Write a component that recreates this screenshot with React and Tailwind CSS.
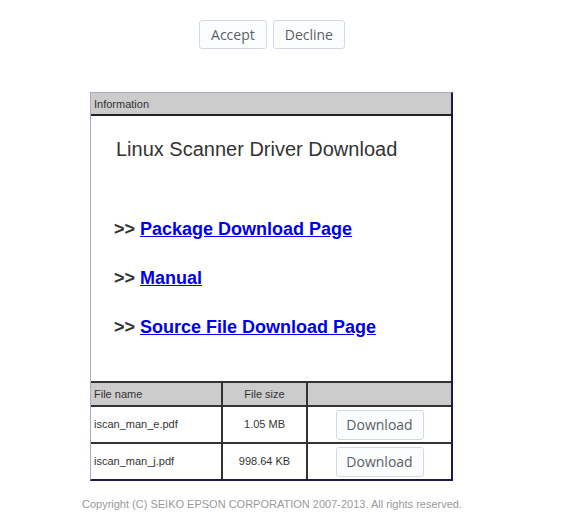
import React from 'react';

const files = [
  { name: 'iscan_man_e.pdf', size: '1.05 MB' },
  { name: 'iscan_man_j.pdf', size: '998.64 KB' },
];

const links = ['Package Download Page', 'Manual', 'Source File Download Page'];

const App = () => {
  return (
    <div className="w-[544px] bg-white font-['Liberation_Sans',Arial,sans-serif]">
      {/* consent buttons */}
      <div className="flex justify-center gap-[6px] pt-[20px] font-['Open_Sans','Noto_Sans',sans-serif]">
        <button className="h-[29px] px-[11px] border border-[#d3d9e3] rounded-[3px] bg-[#fbfcfd] text-[14px] text-[#5a5f66]">Accept</button>
        <button className="h-[29px] px-[11px] border border-[#d3d9e3] rounded-[3px] bg-[#fbfcfd] text-[14px] text-[#5a5f66]">Decline</button>
      </div>

      {/* info box */}
      <div className="mt-[43px] ml-[90px] w-[363px] border-t border-l border-t-[#a9a9c6] border-l-[#a9a9c6] border-r-2 border-b-2 border-r-[#1a1a4d] border-b-[#1a1a4d]">
        <div className="h-[23px] bg-[#cccccc] border-b-2 border-[#222] pl-[3px] flex items-center pt-[2px] text-[11px] text-[#333]">Information</div>
        <div className="h-[265px] pt-[21px] pl-[23px]">
          <p className="ml-[2px] text-[20px] leading-[24px] text-[#333]">Linux Scanner Driver Download</p>
          <div className="mt-[58px] flex flex-col gap-[28px]">
            {links.map((l) => (
              <p key={l} className="text-[18px] leading-[21px] font-bold text-[#333]">
                {'>> '}
                <a href="#" className="text-[#0000ee] underline">{l}</a>
              </p>
            ))}
          </div>
        </div>
        <div className="grid grid-cols-[132px_85px_1fr] border-t-2 border-[#333] text-[11px] text-[#333]">
          <div className="h-[22px] bg-[#cccccc] border-r-2 border-[#333] pl-[3px] flex items-center">File name</div>
          <div className="h-[22px] bg-[#cccccc] border-r-2 border-[#333] flex items-center justify-center">File size</div>
          <div className="h-[22px] bg-[#cccccc]"></div>
          {files.map((f) => (
            <React.Fragment key={f.name}>
              <div className="h-[37px] border-t-2 border-r-2 border-[#333] pl-[3px] flex items-center">{f.name}</div>
              <div className="h-[37px] border-t-2 border-r-2 border-[#333] flex items-center justify-center">{f.size}</div>
              <div className="h-[37px] border-t-2 border-[#333] flex items-center justify-center">
                <button className="h-[30px] w-[88px] border border-[#d3d9e3] rounded-[3px] bg-[#fbfcfd] text-[14px] text-[#5a5f66] font-['Open_Sans','Noto_Sans',sans-serif]">Download</button>
              </div>
            </React.Fragment>
          ))}
        </div>
      </div>

      <p className="mt-[15px] text-center text-[11px] text-[#9a9a9a]">Copyright (C) SEIKO EPSON CORPORATION 2007-2013. All rights reserved.</p>
    </div>
  );
};

export default App;
